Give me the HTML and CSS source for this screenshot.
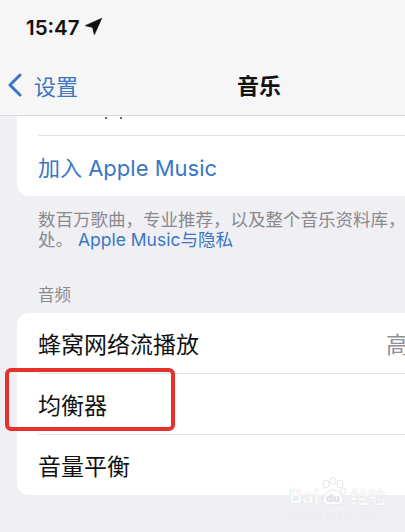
FILE: index.html
```html
<!DOCTYPE html>
<html lang="zh-CN">
<head>
    <meta charset="UTF-8">
    <meta name="viewport" content="width=device-width, initial-scale=1.0">
    <title>音乐</title>
    <link rel="stylesheet" href="styles.css">
</head>
<body>
    <div class="screen">
        <div class="topbar">
            <div class="status">
                <span class="time">15:47</span>
                <svg class="loc" width="17" height="17" viewBox="0 0 16 16">
                    <path d="M15.6 0.4 L0.4 7.2 L7.2 8.8 L8.8 15.6 Z" fill="#111" stroke="#111" stroke-width="0.8" stroke-linejoin="round"/>
                </svg>
            </div>
            <div class="nav">
                <div class="back">
                    <svg width="16" height="24" viewBox="0 0 16 24">
                        <path d="M13 2 L3 12 L13 22" fill="none" stroke="#3a76c4" stroke-width="3" stroke-linecap="round" stroke-linejoin="round"/>
                    </svg>
                    <span>设置</span>
                </div>
                <div class="title">音乐</div>
            </div>
        </div>

        <div class="content">
            <div class="card">
                <div class="row row-cut"><i class="dot"></i><i class="dot"></i></div>
                <div class="sep"></div>
                <div class="row link">加入 Apple Music</div>
            </div>
            <div class="foot">数百万歌曲，专业推荐，以及整个音乐资料库，都在一处。 <span class="link">Apple Music与隐私</span></div>

            <div class="section">音频</div>
            <div class="card">
                <div class="row">
                    <span>蜂窝网络流播放</span>
                    <span class="value">高质量
                        <svg width="10" height="16" viewBox="0 0 10 16">
                            <path d="M2 2 L8 8 L2 14" fill="none" stroke="#c4c4c8" stroke-width="2.2" stroke-linecap="round" stroke-linejoin="round"/>
                        </svg>
                    </span>
                </div>
                <div class="sep"></div>
                <div class="row marked">
                    <span>均衡器</span>
                    <div class="mark"></div>
                </div>
                <div class="sep"></div>
                <div class="row">
                    <span>音量平衡</span>
                </div>
            </div>
        </div>

        <div class="watermark">
            <div class="wm-logo">
                <span>Bai</span>
                <svg width="28" height="30" viewBox="0 0 28 30">
                    <g fill="rgba(255,255,255,0.9)" stroke="#dedee4" stroke-width="0.8">
                        <ellipse cx="7" cy="7" rx="3" ry="4"/>
                        <ellipse cx="14" cy="4" rx="3" ry="3.6"/>
                        <ellipse cx="21" cy="7" rx="3" ry="4"/>
                        <ellipse cx="24" cy="14" rx="2.6" ry="3.2"/>
                        <path d="M4 25 C3 19 9 13 14 13 C19 13 25 19 24 25 C23 29 5 29 4 25 Z"/>
                    </g>
                    <text x="14" y="25" text-anchor="middle" font-size="11" font-family="Inter, sans-serif" fill="#e4e4ea">du</text>
                </svg>
                <span class="wm-cn">经验</span>
            </div>
            <div class="wm-url">jingyan.baidu.com</div>
        </div>
    </div>
</body>
</html>
```

FILE: styles.css
```css
body {
    margin: 0;
    padding: 0;
    background-color: #efeff4;
    font-family: Inter, "Noto Sans CJK SC", sans-serif;
    color: #111;
    overflow: hidden;
}
.screen {
    width: 518px;
    height: 532px;
    position: relative;
    overflow: hidden;
}
.topbar {
    background-color: #f6f6f7;
    border-bottom: 1px solid #dadadd;
}
.status {
    height: 56px;
    display: flex;
    align-items: center;
    padding-left: 26px;
    gap: 5px;
    box-sizing: border-box;
    padding-bottom: 2px;
}
.time {
    font-size: 20.5px;
    font-weight: 600;
}
.loc {
    margin-top: -2px;
}
.nav {
    height: 59px;
    display: flex;
    align-items: center;
    position: relative;
}
.back {
    display: flex;
    align-items: center;
    gap: 11px;
    padding-left: 7px;
    color: #3a76c4;
    font-size: 22px;
    margin-top: -1px;
}
.title {
    position: absolute;
    left: 0;
    right: 0;
    text-align: center;
    font-size: 22px;
    font-weight: bold;
    margin-top: -3px;
}
.content {
    padding: 0 17px;
}
.card {
    background-color: #fff;
    border-radius: 12px;
}
.content > .card:first-child {
    border-radius: 0 0 12px 12px;
}
.row {
    height: 60px;
    display: flex;
    align-items: center;
    justify-content: space-between;
    padding: 0 20px 0 21px;
    font-size: 23px;
    position: relative;
}
.row-cut {
    height: 19px;
    justify-content: flex-start;
    align-items: flex-start;
    gap: 13px;
    padding-left: 88px;
}
.dot {
    width: 2px;
    height: 2px;
    background-color: #333;
    border-radius: 1px;
    margin-top: 1px;
}
.sep {
    height: 1px;
    background-color: #e3e3e6;
    margin-left: 21px;
}
.link {
    color: #3a76c4;
}
.row.link {
    font-size: 22px;
}
.value {
    color: #8e8e93;
    display: flex;
    align-items: center;
    gap: 16px;
}
.foot {
    color: #8a8a8e;
    font-size: 17.5px;
    line-height: 20px;
    padding: 14px 20px 0 21px;
}
.section {
    color: #8a8a8e;
    font-size: 16.5px;
    line-height: 20px;
    padding: 35px 21px 8px;
}
.mark {
    position: absolute;
    left: -12px;
    top: -6px;
    width: 162px;
    height: 55px;
    border: 4px solid #e7322b;
    border-radius: 6px;
}
.watermark {
    position: absolute;
    left: 289px;
    top: 477px;
    color: rgba(255, 255, 255, 0.9);
    text-shadow: 0 0 1px #cdcdd4;
}
.wm-logo {
    display: flex;
    align-items: flex-end;
    font-family: Inter, sans-serif;
    font-weight: bold;
    font-size: 20px;
    line-height: 22px;
}
.wm-cn {
    font-family: "Noto Sans CJK SC", sans-serif;
    font-size: 18px;
    margin-left: 3px;
}
.wm-url {
    font-family: "Liberation Serif", serif;
    font-size: 11px;
    margin-top: 2px;
    letter-spacing: 0.3px;
}
```
